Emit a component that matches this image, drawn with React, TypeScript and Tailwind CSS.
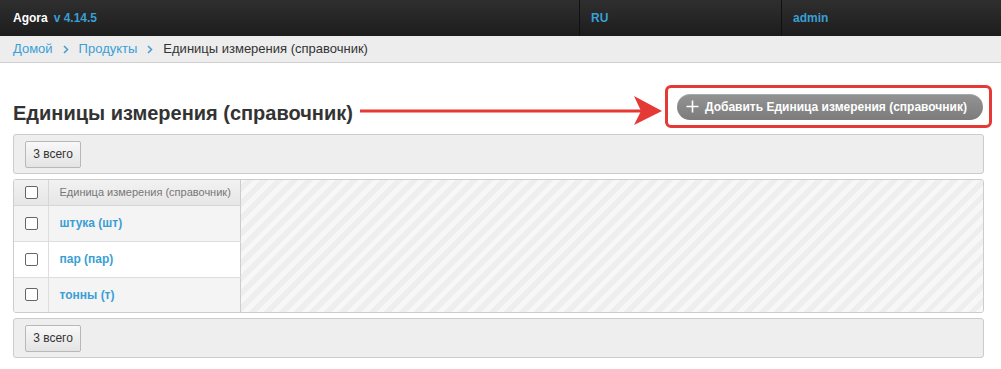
const FONT = "font-['Liberation_Sans',Arial,sans-serif]";

const rows = ["штука (шт)", "пар (пар)", "тонны (т)"];

const Chevron = () => (
  <svg width="6" height="9" viewBox="0 0 6 9" className="mx-[10px]">
    <path d="M1 1l3.5 3.5L1 8" fill="none" stroke="#4a9fd0" strokeWidth="1.6" />
  </svg>
);

const Checkbox = () => (
  <span className="block h-[13px] w-[13px] rounded-[2px] border border-[#666] bg-white" />
);

const TotalBar = () => (
  <div className="flex h-[40px] items-center rounded-[3px] border border-[#cccccc] bg-[#eeeeee] px-[11px]">
    <button className="h-[27px] w-[56px] rounded-[2px] border border-[#b8b8b8] bg-gradient-to-b from-[#f8f8f8] to-[#e4e4e4] text-[12px] text-[#333]">
      3 всего
    </button>
  </div>
);

const Arrow = () => (
  <svg width="304" height="32" viewBox="0 0 304 32" className="mt-[10px] shrink-0">
    <line x1="0" y1="16" x2="285" y2="16" stroke="#e53935" strokeWidth="3" />
    <path d="M274 1 L302 16 L274 30 L281 16 Z" fill="#e53935" />
  </svg>
);

export default function App() {
  return (
    <div className={`${FONT} min-h-[369px] w-[1001px] bg-white`}>
      <div className="flex h-[36px] items-stretch bg-gradient-to-b from-[#2f2f2f] to-[#1d1d1d] text-[12px] font-bold">
        <div className="flex w-[579px] items-center pl-[13px]">
          <span className="text-white">Agora</span>
          <span className="ml-[6px] text-[#3a9fd5]">v 4.14.5</span>
        </div>
        <div className="flex w-[202px] items-center border-l border-[#111] pl-[11px] text-[#3a9fd5]">RU</div>
        <div className="flex flex-1 items-center border-l border-[#111] pl-[11px] text-[#3a9fd5]">admin</div>
      </div>

      <div className="flex h-[27px] items-center border-b border-[#cfcfcf] bg-[#ededed] px-[13px] text-[13px]">
        <span className="text-[#3a9fd5]">Домой</span>
        <Chevron />
        <span className="text-[#3a9fd5]">Продукты</span>
        <Chevron />
        <span className="text-[#333]">Единицы измерения (справочник)</span>
      </div>

      <div className="pl-[13px] pr-[9px]">
        <div className="flex items-start pt-[22px]">
          <h1 className="mt-[16px] shrink-0 text-[20px] font-bold leading-[24px] text-[#333]">
            Единицы измерения (справочник)
          </h1>
          <div className="flex-1" />
          <Arrow />
          <div className="ml-[1px] flex h-[43px] w-[327px] items-center justify-center rounded-[6px] border-[3px] border-[#e53935] pl-[3px]">
            <button className="flex h-[26px] w-[306px] items-center rounded-full bg-gradient-to-b from-[#939393] to-[#7c7c7c] pl-[9px] text-[12px] font-bold text-white shadow-[inset_0_1px_0_rgba(255,255,255,0.2)]">
              <svg width="13" height="13" viewBox="0 0 13 13" className="mr-[6px]">
                <path d="M6.5 0.5v12M0.5 6.5h12" stroke="white" strokeWidth="1.6" />
              </svg>
              Добавить Единица измерения (справочник)
            </button>
          </div>
        </div>

        <div className="mt-[6px] mr-[8px]">
          <TotalBar />

          <div className="mt-[5px] flex overflow-hidden rounded-[3px] border border-[#cccccc]">
            <table className="w-[227px] shrink-0 border-collapse border-r border-[#cccccc] text-left">
              <thead>
                <tr className="h-[25px] bg-gradient-to-b from-[#f2f2f2] to-[#e6e6e6]">
                  <th className="w-[34px] border-r border-b border-[#d6d6d6] pl-[11px]">
                    <Checkbox />
                  </th>
                  <th className="border-b border-[#d6d6d6] pl-[11px] text-[11px] font-normal text-[#777]">
                    Единица измерения (справочник)
                  </th>
                </tr>
              </thead>
              <tbody>
                {rows.map((r, i) => (
                  <tr
                    key={r}
                    className={`${i % 2 === 0 ? "bg-[#f4f4f4]" : "bg-white"} ${
                      i < rows.length - 1 ? "h-[36px] border-b border-[#dddddd]" : "h-[35px]"
                    }`}
                  >
                    <td className="border-r border-[#dddddd] pl-[11px]">
                      <Checkbox />
                    </td>
                    <td className="pl-[11px] text-[12px] font-bold text-[#3a9fd5]">{r}</td>
                  </tr>
                ))}
              </tbody>
            </table>
            <div className="flex-1 bg-[repeating-linear-gradient(-45deg,#f7f7f7_0px,#f7f7f7_5px,#eeeeee_5px,#eeeeee_10.6px)]" />
          </div>

          <div className="mt-[5px]">
            <TotalBar />
          </div>
        </div>
      </div>
    </div>
  );
}
